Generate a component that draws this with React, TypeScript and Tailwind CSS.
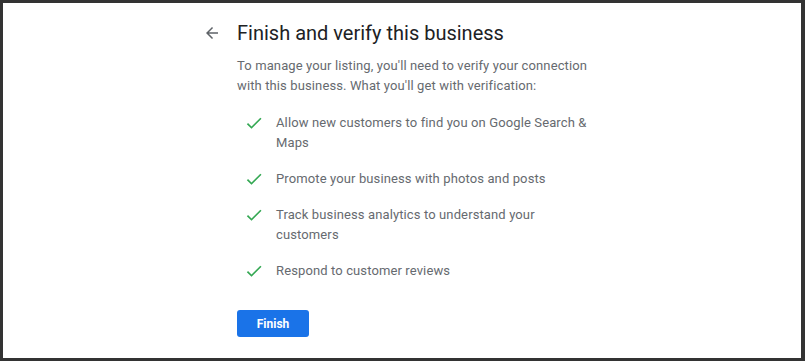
const benefits = [
  "Allow new customers to find you on Google Search & Maps",
  "Promote your business with photos and posts",
  "Track business analytics to understand your customers",
  "Respond to customer reviews",
];

function CheckIcon() {
  return (
    <svg width="20" height="20" viewBox="0 0 24 24" className="shrink-0">
      <path
        d="M9 16.17 4.83 12l-1.42 1.41L9 19 21 7l-1.41-1.41z"
        fill="#34a853"
      />
    </svg>
  );
}

function BackArrow() {
  return (
    <svg width="18" height="18" viewBox="0 0 24 24">
      <path
        d="M20 11H7.83l5.59-5.59L12 4l-8 8 8 8 1.41-1.41L7.83 13H20v-2z"
        fill="#5f6368"
      />
    </svg>
  );
}

export default function App() {
  return (
    <div className="h-[361px] w-[805px] overflow-hidden border-[3px] border-r-4 border-[#333333] bg-white font-['Roboto',sans-serif]">
      <div className="flex pl-[197px] pt-[14px]">
        <button className="mt-[7px] flex h-6 w-6 items-start justify-center">
          <BackArrow />
        </button>
        <div className="ml-[13px] w-[370px]">
          <h1 className="text-[20px] leading-8 text-[#202124]">
            Finish and verify this business
          </h1>
          <p className="mt-[7px] w-[362px] text-[13px] leading-5 tracking-[0.12px] text-[#666a6f]">
            To manage your listing, you'll need to verify your connection with
            this business. What you'll get with verification:
          </p>
          <ul className="mt-[17px] flex flex-col gap-4 pl-[7px]">
            {benefits.map((b) => (
              <li key={b} className="flex items-start">
                <span className="mr-[12px]">
                  <CheckIcon />
                </span>
                <span className="w-[322px] text-[13px] leading-5 tracking-[0.12px] text-[#666a6f]">
                  {b}
                </span>
              </li>
            ))}
          </ul>
          <button className="mt-[29px] h-[27px] w-[72px] rounded-[3px] bg-[#1a73e8] text-[12px] font-bold text-white">
            Finish
          </button>
        </div>
      </div>
    </div>
  );
}
